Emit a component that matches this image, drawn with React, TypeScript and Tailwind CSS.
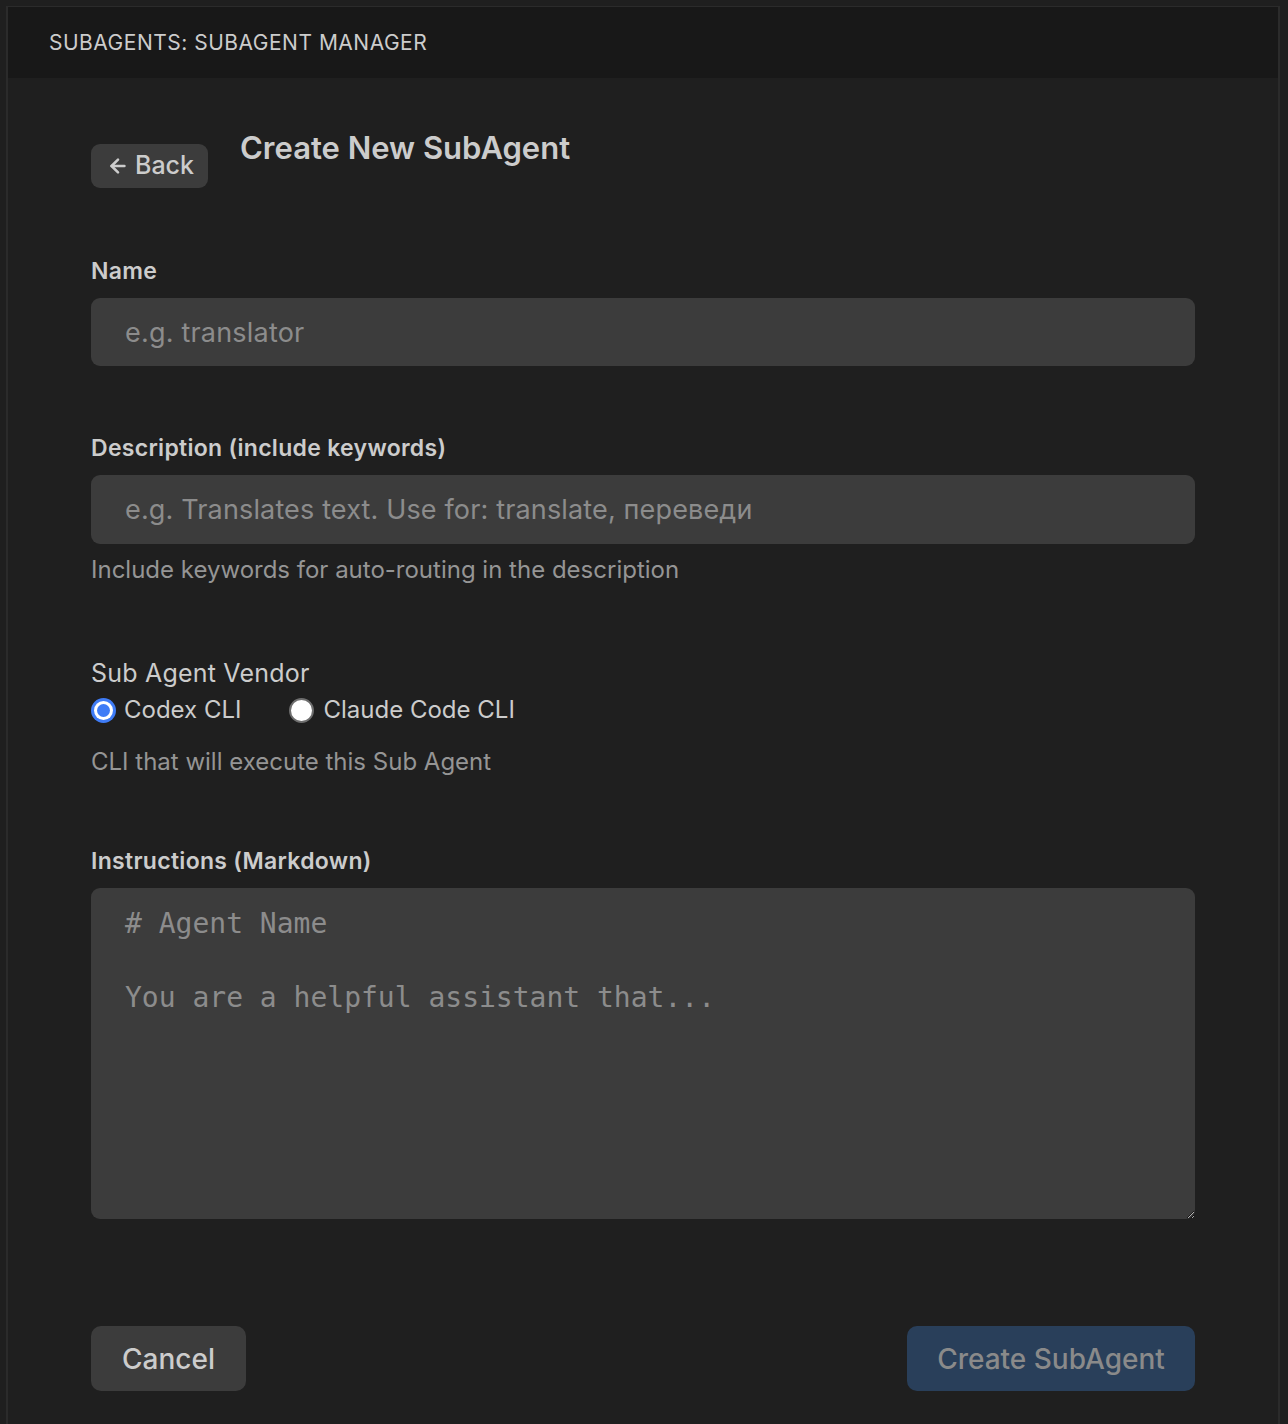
import React, { useState } from "react";
import { ArrowLeft } from "lucide-react";

const SANS = "font-['Inter','Noto_Sans',sans-serif]";

const Radio = ({ checked }: { checked: boolean }) =>
  checked ? (
    <span className="flex h-[25px] w-[25px] items-center justify-center rounded-full bg-[#3f7cf6]">
      <span className="flex h-[19px] w-[19px] items-center justify-center rounded-full bg-white">
        <span className="h-[13px] w-[13px] rounded-full bg-[#3f7cf6]" />
      </span>
    </span>
  ) : (
    <span className="h-[25px] w-[25px] rounded-full border-2 border-[#6e6e6e] bg-white" />
  );

export default function App() {
  const [vendor, setVendor] = useState<"codex" | "claude">("codex");

  return (
    <div className={`min-h-[1424px] bg-[#1f1f1f] pl-[6px] pr-[8px] pt-[6px] ${SANS}`}>
      <div className="flex min-h-[1418px] flex-col border-x-2 border-t border-[#2b2b2b] bg-[#1f1f1f]">
        {/* panel header */}
        <div className="flex h-[71px] items-center bg-[#181818] pl-[41px] text-[21px] tracking-[0.5px] text-[#cccccc]">
          SUBAGENTS: SUBAGENT MANAGER
        </div>

        <div className="w-[1104px] ml-[83px] pt-[52px]">
          <div className="flex items-start gap-[32px]">
            <button className="mt-[14px] flex h-[44px] items-center gap-[6px] rounded-[9px] bg-[#3c3c3c] pl-[16px] pr-[14px] text-[25px] font-medium text-[#cccccc]">
              <ArrowLeft size={22} strokeWidth={2.8} />
              Back
            </button>
            <h2 className="text-[31px] font-semibold leading-[36px] text-[#cccccc]">Create New SubAgent</h2>
          </div>

          <label className="mt-[69px] block text-[23px] font-semibold leading-[28px] tracking-[0.3px] text-[#cccccc]">
            Name
          </label>
          <input
            placeholder="e.g. translator"
            className="mt-[13px] h-[68px] w-full rounded-[9px] bg-[#3c3c3c] px-[34px] text-[27px] tracking-[0.2px] text-[#cccccc] outline-none placeholder:text-[#8c8c8c]"
          />

          <label className="mt-[68px] block text-[23px] font-semibold leading-[28px] tracking-[0.3px] text-[#cccccc]">
            Description (include keywords)
          </label>
          <input
            placeholder="e.g. Translates text. Use for: translate, переведи"
            className="mt-[13px] h-[69px] w-full rounded-[9px] bg-[#3c3c3c] px-[34px] text-[27px] tracking-[0.15px] text-[#cccccc] outline-none placeholder:text-[#8c8c8c]"
          />
          <p className="mt-[11px] text-[24px] leading-[30px] text-[#959595]">
            Include keywords for auto-routing in the description
          </p>

          <div className="mt-[72px] text-[25px] leading-[32px] tracking-[0.2px] text-[#cccccc]">Sub Agent Vendor</div>
          <div className="mt-[6px] flex h-[30px] items-center gap-[48px] text-[24px] text-[#cccccc]">
            <button className="flex items-center gap-[8px]" onClick={() => setVendor("codex")}>
              <Radio checked={vendor === "codex"} />
              Codex CLI
            </button>
            <button className="flex items-center gap-[9px]" onClick={() => setVendor("claude")}>
              <Radio checked={vendor === "claude"} />
              Claude Code CLI
            </button>
          </div>
          <p className="mt-[22px] text-[24px] leading-[30px] text-[#959595]">CLI that will execute this Sub Agent</p>

          <label className="mt-[70px] block text-[23px] font-semibold leading-[28px] tracking-[0.3px] text-[#cccccc]">
            Instructions (Markdown)
          </label>
          <textarea
            placeholder={"# Agent Name\n\nYou are a helpful assistant that..."}
            className="mt-[13px] block h-[331px] w-full rounded-[9px] bg-[#3c3c3c] px-[34px] pt-[17px] font-['DejaVu_Sans_Mono','Liberation_Mono',monospace] text-[28px] leading-[37px] text-[#cccccc] outline-none placeholder:text-[#8c8c8c]"
          />

          <div className="mt-[107px] flex items-center justify-between">
            <button className="h-[65px] w-[155px] rounded-[10px] bg-[#3c3c3c] text-[28px] font-medium text-[#cccccc]">
              Cancel
            </button>
            <button className="h-[65px] w-[288px] rounded-[10px] bg-[#293f5a] text-[28px] font-medium text-[#8a8a8a]">
              Create SubAgent
            </button>
          </div>
        </div>
      </div>
    </div>
  );
}
